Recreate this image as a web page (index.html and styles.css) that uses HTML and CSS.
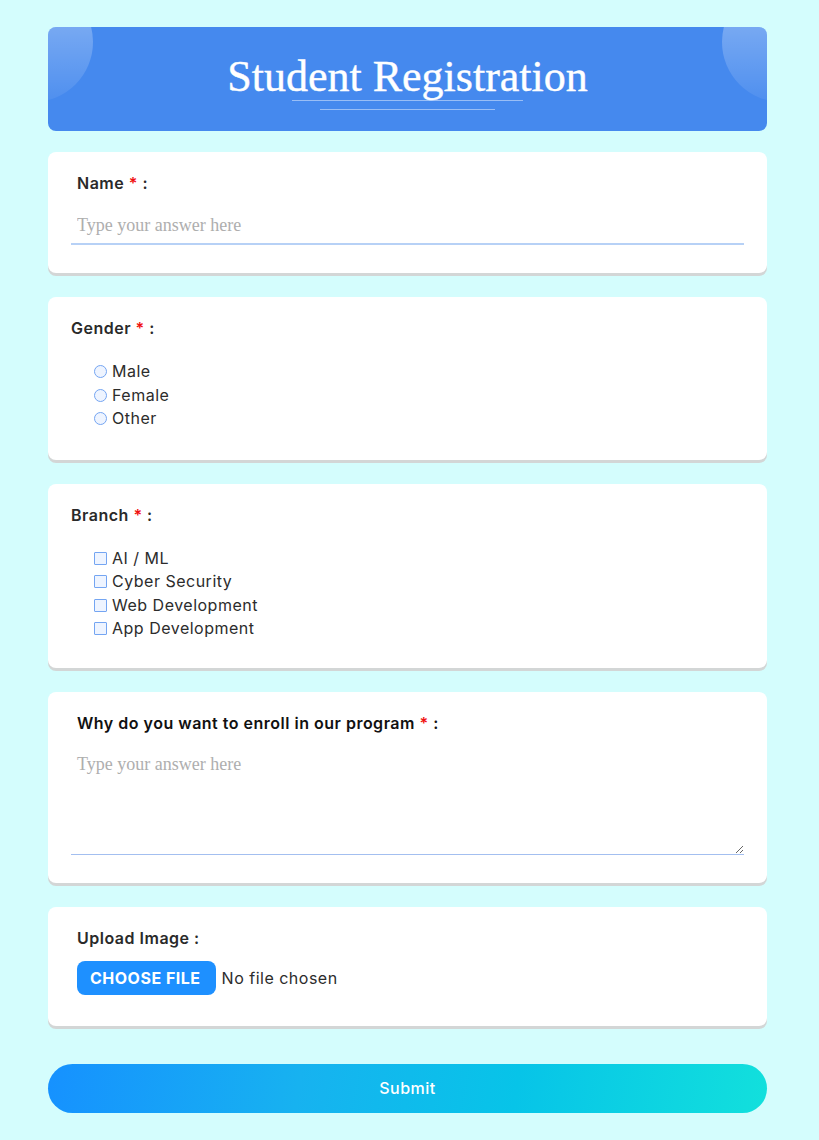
FILE: index.html
```html
<!DOCTYPE html>
<html lang="en">
<head>
  <meta charset="UTF-8">
  <title>Student Registration</title>
  <link rel="stylesheet" href="styles.css">
</head>
<body>

  <form class="form-wrap">
    <div class="form-header">
      <h1>Student Registration</h1>
      <div class="title-line"></div>
      <div class="title-line short"></div>
    </div>

    <div class="card card-name">
      <label class="field-label inset" for="name">Name <span class="req">*</span> :</label>
      <input class="text-input" type="text" id="name" placeholder="Type your answer here">
    </div>

    <div class="card">
      <p class="field-label">Gender <span class="req">*</span> :</p>
      <div class="options">
        <label class="option"><input type="radio" name="gender"> Male</label>
        <label class="option"><input type="radio" name="gender"> Female</label>
        <label class="option"><input type="radio" name="gender"> Other</label>
      </div>
    </div>

    <div class="card card-branch">
      <p class="field-label">Branch <span class="req">*</span> :</p>
      <div class="options">
        <label class="option"><input type="checkbox"> AI / ML</label>
        <label class="option"><input type="checkbox"> Cyber Security</label>
        <label class="option"><input type="checkbox"> Web Development</label>
        <label class="option"><input type="checkbox"> App Development</label>
      </div>
    </div>

    <div class="card card-why">
      <label class="field-label inset dark" for="why">Why do you want to enroll in our program <span class="req">*</span> :</label>
      <textarea class="text-area" id="why" placeholder="Type your answer here"></textarea>
    </div>

    <div class="card card-upload">
      <label class="field-label inset" for="photo">Upload Image :</label>
      <div class="upload">
        <label class="file-button" for="photo">CHOOSE FILE</label>
        <span class="file-name">No file chosen</span>
        <input type="file" id="photo" class="file-input">
      </div>
    </div>

    <button type="submit" class="submit">Submit</button>
  </form>

</body>
</html>
```

FILE: styles.css
```css
body {
  background: #d4fdfd;
  margin: 0;
  padding: 27px 52px 28px 48px;
}

.form-wrap {
  display: flex;
  flex-direction: column;
  font-family: Inter, "Open Sans", sans-serif;
}

.form-header {
  position: relative;
  overflow: hidden;
  background: #4589ee;
  border-radius: 8px;
  height: 104px;
  display: flex;
  flex-direction: column;
  align-items: center;
  margin-bottom: 21px;
}

.form-header::before,
.form-header::after {
  content: "";
  position: absolute;
  top: -45px;
  width: 120px;
  height: 120px;
  border-radius: 50%;
  background: linear-gradient(to bottom, rgba(255, 255, 255, 0.4), rgba(255, 255, 255, 0.05));
}

.form-header::before {
  left: -75px;
}

.form-header::after {
  right: -75px;
}

.form-header h1 {
  margin: 28px 0 0;
  font-family: "Liberation Serif", serif;
  font-weight: normal;
  font-size: 44px;
  line-height: 44px;
  color: #fff;
  -webkit-text-stroke: 0.4px #fff;
}

.title-line {
  width: 231px;
  height: 1px;
  background: rgba(255, 255, 255, 0.45);
  margin-top: 1px;
}

.title-line.short {
  width: 175px;
  margin-top: 8px;
}

.card {
  background: #fff;
  border-radius: 8px;
  box-shadow: 0 3px 0 #d3d6d6;
  padding: 21px 23px 29px;
  margin-bottom: 24px;
  display: flex;
  flex-direction: column;
}

.card-name {
  padding-bottom: 28px;
}

.card-branch {
  padding-bottom: 27px;
}

.card-why {
  padding-bottom: 28px;
}

.card-upload {
  padding-bottom: 31px;
}

.field-label {
  margin: 0;
  font-size: 16px;
  font-weight: 600;
  line-height: 20px;
  letter-spacing: 0.5px;
  color: #2a2a2a;
}

.field-label.inset {
  margin-left: 6px;
}

.field-label.dark {
  color: #111;
}

.req {
  color: #f01010;
}

.text-input {
  margin-top: 14px;
  height: 38px;
  box-sizing: border-box;
  border: none;
  border-bottom: 2px solid #b7d1f6;
  padding: 0 6px;
  font-family: "Liberation Serif", serif;
  font-size: 18px;
  outline: none;
}

.text-input::placeholder,
.text-area::placeholder {
  color: #aeaeae;
}

.options {
  display: flex;
  flex-direction: column;
  margin: 22px 0 0 23px;
}

.option {
  display: flex;
  align-items: center;
  gap: 5px;
  font-size: 16px;
  line-height: 23.5px;
  letter-spacing: 0.5px;
  color: #2c2c2c;
}

.option input {
  appearance: none;
  margin: 0;
  width: 13px;
  height: 13px;
  border: 1px solid #74a5f2;
  background: #eef4ff;
}

.option input[type="radio"] {
  border-radius: 50%;
}

.option input[type="checkbox"] {
  border-radius: 1px;
}

.text-area {
  margin-top: 13px;
  height: 109px;
  box-sizing: border-box;
  border: none;
  border-bottom: 1px solid #a3bff0;
  padding: 8px 6px;
  font-family: "Liberation Serif", serif;
  font-size: 18px;
  resize: vertical;
  outline: none;
}

.upload {
  display: flex;
  align-items: center;
  gap: 6px;
  margin: 13px 0 0 6px;
}

.file-button {
  background: #1e90ff;
  color: #fff;
  font-weight: 700;
  font-size: 16px;
  letter-spacing: 0.5px;
  height: 34px;
  padding: 0 15px 0 13px;
  display: flex;
  align-items: center;
  border-radius: 8px;
  cursor: pointer;
}

.file-name {
  font-size: 16px;
  letter-spacing: 0.5px;
  color: #2c2c2c;
}

.file-input {
  display: none;
}

.submit {
  margin-top: 14px;
  height: 49px;
  border: none;
  border-radius: 25px;
  background: linear-gradient(100deg, #1691ff 0%, #17b2f0 35%, #07c4e8 65%, #12e0dc 100%);
  color: #fff;
  font-family: Inter, sans-serif;
  font-weight: 500;
  font-size: 16px;
  letter-spacing: 0.5px;
  cursor: pointer;
}
```
